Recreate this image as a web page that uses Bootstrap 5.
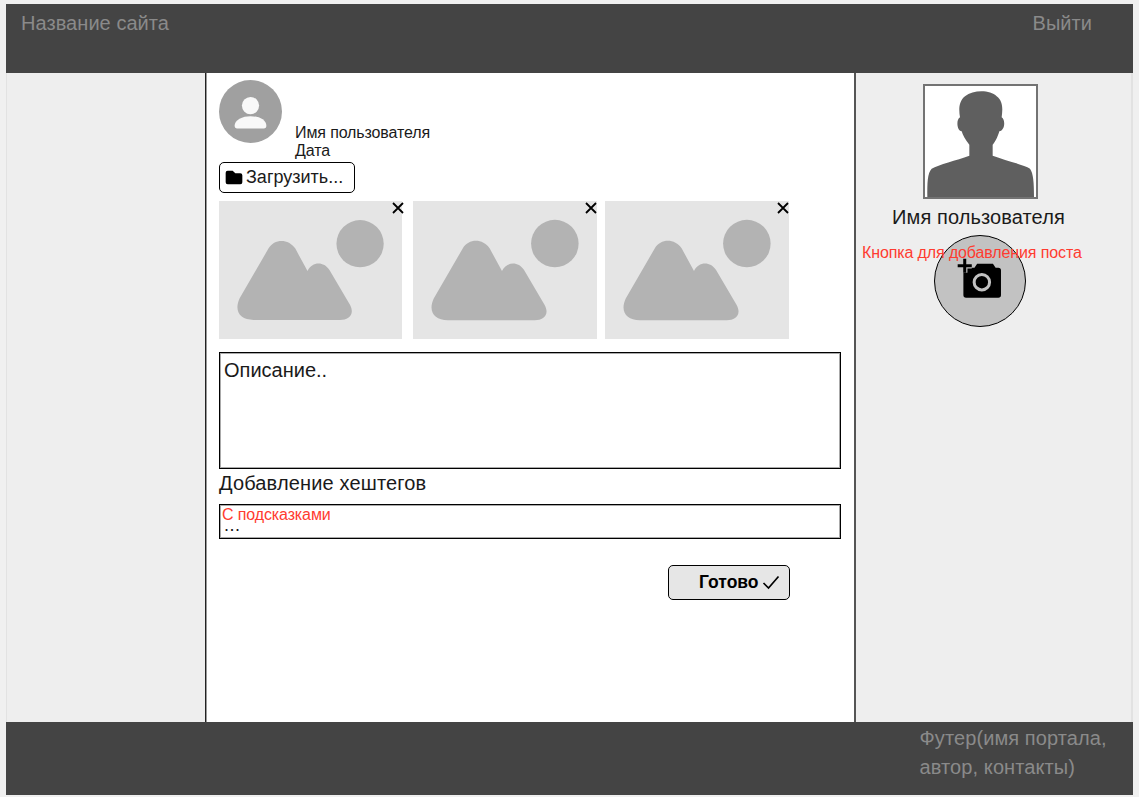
<!DOCTYPE html>
<html lang="ru">
<head>
    <meta charset="UTF-8">
    <meta name="viewport" content="width=device-width, initial-scale=1.0">
    <title>Добавление поста</title>
    <link href="https://cdn.jsdelivr.net/npm/bootstrap@5.3.0/dist/css/bootstrap.min.css" rel="stylesheet">
    <style>
        html, body { height: 100%; }
        body {
            font-family: "Liberation Sans", Arial, sans-serif;
            background: #f0f0f0;
            color: #1a1a1a;
            font-size: 16px;
            overflow: hidden;
        }
        .page-frame { width: 1127px; margin: 4px 0 0 6px; }
        .site-head, .site-foot { background: #444; color: #8a8a8a; font-size: 20px; letter-spacing: .05px; }
        .site-head { height: 69px; padding: 4px 41px 0 15px; }
        .site-foot { height: 73px; padding: 2px 0 0 913.5px; line-height: 29px; letter-spacing: .1px; }
        .page-body { height: 649px; }
        .side-left { width: 199px; background: #eee; border-left: 1px solid #e2e2e2; }
        .side-right { flex: 1; background: #eee; border-right: 2px solid #e2e2e2; padding: 11px 27px 0 0; position: relative; }
        .center-col {
            width: 651px;
            background: #fff;
            border-left: 1px solid #222;
            border-right: 2px solid #555;
            box-shadow: inset 1px 0 0 #999;
            padding: 7px 0 0 13px;
        }
        .author-row { height: 81px; }
        .author-text { margin: 44px 0 0 13px; line-height: 18px; letter-spacing: -.12px; }
        .upload-btn {
            width: 136px; height: 31px; padding: 0 0 0 5px;
            border: 1px solid #000; border-radius: 5px; background: #fff;
            color: #1a1a1a; font-size: 18px; gap: 3px; margin-top: 1px;
        }
        .upload-btn:hover { background: #fff; color: #1a1a1a; border-color: #000; }
        .thumb-row { margin-top: 8px; }
        .thumb-item { position: relative; width: 184px; height: 138px; background: #e5e5e5; }
        .thumb-item:first-child { width: 183px; }
        .thumb-item:nth-child(2) { margin-left: 11px; }
        .thumb-item:last-child { margin-left: 8px; }
        .thumb-item svg.pic { display: block; width: 100%; height: 100%; }
        .thumb-close { position: absolute; top: 0; right: -1px; width: 14px; height: 14px; }
        .thumb-item:first-child .thumb-close { right: -3px; }
        .desc-box, .tag-box {
            width: 622px; border: 1px solid #000; border-radius: 0;
            box-shadow: inset 0 0 0 1px #aaa;
            color: #1a1a1a; background: #fff;
        }
        .desc-box { height: 117px; margin-top: 13px; padding: 4px; font-size: 20px; resize: none; line-height: 26px; }
        .tag-title { font-size: 20px; line-height: 28px; margin: 0 0 7px; letter-spacing: .15px; }
        .tag-wrap { position: relative; width: 622px; }
        .tag-box { height: 35px; padding: 11px 4px 0; font-size: 18px; line-height: 18px; letter-spacing: .5px; }
        .hint-red { color: #ff3b30; font-size: 16px; line-height: 18px; letter-spacing: -.12px; }
        .tag-hint { position: absolute; left: 3px; top: 2px; }
        .done-row { width: 571px; margin-top: 26px; }
        .done-btn {
            width: 122px; height: 35px; padding: 0 0 0 30px;
            background: #e6e6e6; border: 1px solid #000; border-radius: 5px;
            color: #000; font-weight: 700; font-size: 17.5px; gap: 3px;
        }
        .done-btn:hover { background: #e6e6e6; color: #000; border-color: #000; }
        .profile-pic { display: block; width: 115px; height: 115px; background: #fff; border: 2px solid #737373; }
        .profile-name { font-size: 20px; line-height: 24px; margin: 6px 3px 0 0; letter-spacing: .1px; }
        .add-post {
            width: 92px; height: 92px; margin: 6px auto 0; padding: 0;
            border: 1px solid #000; border-radius: 50%; background: #c2c2c2;
        }
        .add-post:hover { background: #c2c2c2; border-color: #000; }
        .add-post svg { margin: 0 2px 6px 0; }
        .add-hint { position: absolute; left: 6px; top: 171px; white-space: nowrap; }
    </style>
</head>
<body>
    <div class="page-frame">
        <header class="site-head d-flex justify-content-between align-items-start">
            <span>Название сайта</span>
            <span>Выйти</span>
        </header>

        <div class="page-body d-flex">
            <div class="side-left"></div>

            <main class="center-col">
                <div class="author-row d-flex">
                    <svg width="63" height="63" viewBox="655 239 190 190">
                        <circle cx="750" cy="334" r="95" fill="#a0a0a0"/>
                        <circle cx="750" cy="316" r="26" fill="#f8f8f8"/>
                        <path d="M702 378 C702 338 798 338 798 378 Q798 385 791 385 H709 Q702 385 702 378 Z" fill="#f8f8f8"/>
                    </svg>
                    <div class="author-text">Имя пользователя<br>Дата</div>
                </div>

                <button type="button" class="btn upload-btn d-flex align-items-center">
                    <svg width="18" height="15" viewBox="675 508 54 44">
                        <path d="M677 516 Q677 510 683 510 H698 L706 517 H721 Q727 517 727 523 V544 Q727 550 721 550 H683 Q677 550 677 544 Z" fill="#000"/>
                    </svg>
                    Загрузить...
                </button>

                <div class="thumb-row d-flex">
                    <div class="thumb-item">
                        <svg class="pic" viewBox="56 34 550 412">
                            <path d="M160 390 C120 390 100 365 118 325 L205 175 C222 145 265 145 285 175 L322 243 C335 215 370 212 388 240 L450 345 C465 375 445 390 420 390 Z" fill="#b3b3b3"/>
                            <circle cx="480" cy="161" r="71" fill="#b3b3b3"/>
                        </svg>
                        <svg class="thumb-close" viewBox="0 0 14 14"><path d="M2 2 L12 12 M12 2 L2 12" stroke="#000" stroke-width="1.8"/></svg>
                    </div>
                    <div class="thumb-item">
                        <svg class="pic" viewBox="56 34 550 412">
                            <path d="M160 390 C120 390 100 365 118 325 L205 175 C222 145 265 145 285 175 L322 243 C335 215 370 212 388 240 L450 345 C465 375 445 390 420 390 Z" fill="#b3b3b3"/>
                            <circle cx="480" cy="161" r="71" fill="#b3b3b3"/>
                        </svg>
                        <svg class="thumb-close" viewBox="0 0 14 14"><path d="M2 2 L12 12 M12 2 L2 12" stroke="#000" stroke-width="1.8"/></svg>
                    </div>
                    <div class="thumb-item">
                        <svg class="pic" viewBox="56 34 550 412">
                            <path d="M160 390 C120 390 100 365 118 325 L205 175 C222 145 265 145 285 175 L322 243 C335 215 370 212 388 240 L450 345 C465 375 445 390 420 390 Z" fill="#b3b3b3"/>
                            <circle cx="480" cy="161" r="71" fill="#b3b3b3"/>
                        </svg>
                        <svg class="thumb-close" viewBox="0 0 14 14"><path d="M2 2 L12 12 M12 2 L2 12" stroke="#000" stroke-width="1.8"/></svg>
                    </div>
                </div>

                <div class="desc-box">Описание..</div>
                <div class="tag-title">Добавление хештегов</div>
                <div class="tag-wrap">
                    <div class="tag-box">...</div>
                    <span class="hint-red tag-hint">С подсказками</span>
                </div>

                <div class="done-row d-flex justify-content-end">
                    <button type="button" class="btn done-btn d-flex align-items-center">
                        Готово
                        <svg width="18" height="15" viewBox="0 0 18 15"><path d="M1.5 8 L6.5 13 L16.5 1.5" fill="none" stroke="#000" stroke-width="1.7"/></svg>
                    </button>
                </div>
            </main>

            <aside class="side-right d-flex flex-column align-items-center">
                <svg class="profile-pic" viewBox="225 49 333 333">
                    <path d="M232 382 C232 340 232 310 245 297 C265 285 320 272 358 258 L358 225 C345 210 338 195 335 185 C320 182 318 150 330 143 C326 120 326 95 345 80 C370 60 420 60 440 80 C460 95 458 120 455 143 C467 150 465 182 448 185 C445 195 438 215 428 225 L428 258 C465 272 520 285 540 297 C550 310 552 340 552 382 Z" fill="#5f5f5f"/>
                </svg>
                <div class="profile-name">Имя пользователя</div>
                <button type="button" class="btn add-post d-flex align-items-center justify-content-center">
                    <svg width="47" height="42" viewBox="315 565 140 125">
                        <path d="M337 597 H370 L378 585 H425 L433 597 H441 Q449 597 449 605 V678 Q449 686 441 686 H345 Q337 686 337 678 Z" fill="#000"/>
                        <circle cx="392" cy="640" r="23" fill="none" stroke="#c2c2c2" stroke-width="9"/>
                        <path d="M341 570 V612 M320 591 H362" stroke="#c2c2c2" stroke-width="16"/>
                        <path d="M341 570 V612 M320 591 H362" stroke="#000" stroke-width="9"/>
                    </svg>
                </button>
                <span class="hint-red add-hint">Кнопка для добавления поста</span>
            </aside>
        </div>

        <footer class="site-foot">Футер(имя портала,<br>автор, контакты)</footer>
    </div>

    <script src="https://cdn.jsdelivr.net/npm/bootstrap@5.3.0/dist/js/bootstrap.bundle.min.js"></script>
</body>
</html>
